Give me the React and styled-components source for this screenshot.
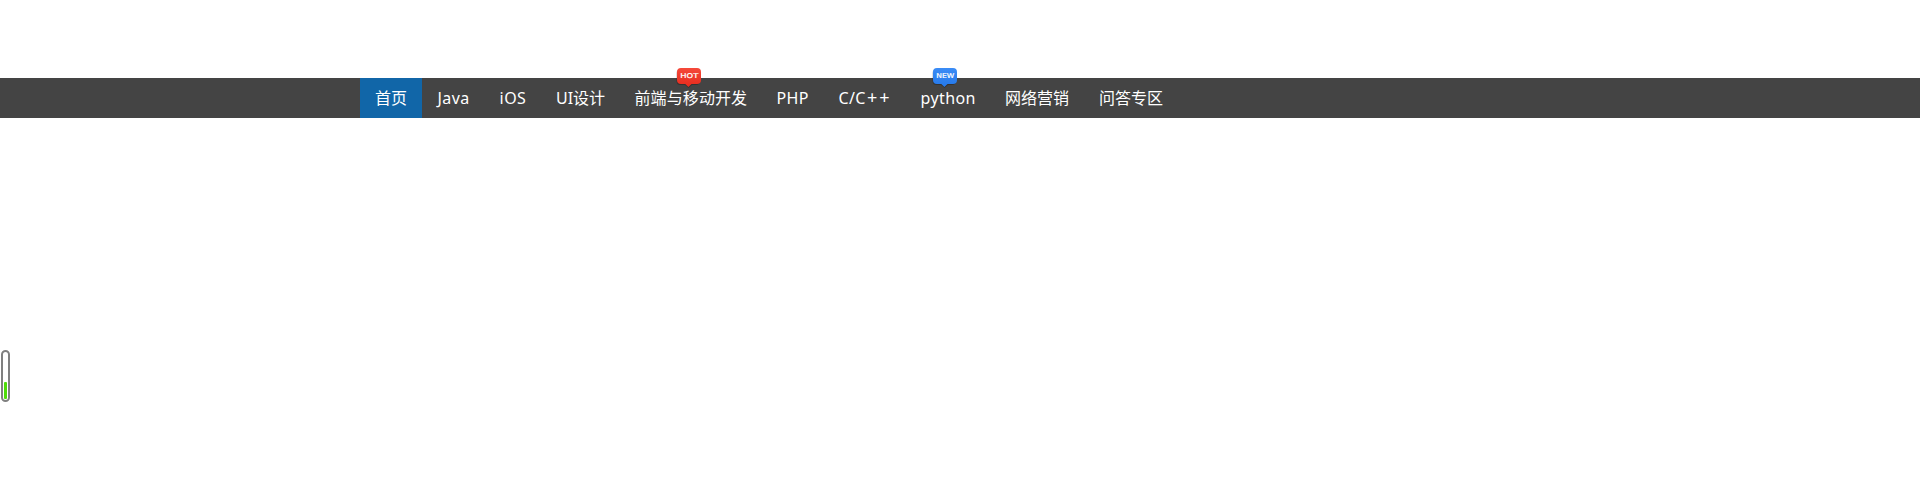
import React from "react";
import styled, { createGlobalStyle } from "styled-components";

const GlobalStyle = createGlobalStyle`
  * { box-sizing: border-box; }
  body { margin: 0; background: #fff; }
`;

const Page = styled.div`
  height: 488px;
  padding-top: 78px;
  overflow: hidden;
  font-family: "Noto Sans", "Noto Sans CJK SC", sans-serif;
`;

const NavBar = styled.nav`
  height: 40px;
  background: #444;
`;

const NavList = styled.ul`
  display: flex;
  width: 1200px;
  height: 40px;
  margin: 0 auto;
  padding: 0;
  list-style: none;
`;

const NavItem = styled.li`
  position: relative;
  width: ${(p) => p.$width}px;
  background: ${(p) => (p.$active ? "#1166a8" : "transparent")};
`;

const NavLink = styled.a`
  display: block;
  height: 40px;
  padding-left: ${(p) => p.$inset}px;
  color: #fff;
  font-size: 16px;
  line-height: 40px;
  letter-spacing: ${(p) => p.$spacing || 0}px;
  white-space: nowrap;
  text-decoration: none;
`;

const Suffix = styled.span`
  font-size: 18px;
  line-height: 1;
  letter-spacing: 2px;
  margin-left: 1px;
`;

const Badge = styled.svg`
  position: absolute;
  top: -11px;
  left: ${(p) => p.$left}px;
  width: 26px;
  height: 22px;
  overflow: visible;
`;

const Gauge = styled.div`
  position: absolute;
  top: 350px;
  left: 1px;
  display: flex;
  align-items: flex-end;
  width: 9px;
  height: 52px;
  padding: 1px;
  border: 2px solid #808080;
  border-radius: 5px;
`;

const GaugeLevel = styled.div`
  width: 3px;
  height: 17px;
  border-radius: 1px;
  background: #4fdc0a;
`;

const badgeColors = {
  HOT: ["#f5493a", "#e62a1c"],
  NEW: ["#3b8cf6", "#2478ea"],
};

function Flag({ label, left }) {
  const [top, bottom] = badgeColors[label];
  return (
    <Badge viewBox="0 0 26 22" $left={left}>
      <defs>
        <linearGradient id={label} x1="0" y1="0" x2="0" y2="1">
          <stop offset="0" stopColor={top} />
          <stop offset="1" stopColor={bottom} />
        </linearGradient>
      </defs>
      <path d="M5 2H20A4 4 0 0 1 24 6V14A4 4 0 0 1 20 18H16L12.5 21L9 18H4.5A4 4 0 0 1 .5 14V6A4 4 0 0 1 5 2Z" fill="#000" opacity=".25" />
      <path d="M5 1H21A4 4 0 0 1 25 5V13A4 4 0 0 1 21 17H15.5L12.4 20L9.3 17H5A4 4 0 0 1 1 13V5A4 4 0 0 1 5 1Z" fill={`url(#${label})`} />
      <text x="4.3" y="11" textLength="18" lengthAdjust="spacingAndGlyphs" fill="#fff" stroke="#fff" strokeWidth=".2" fontFamily="DejaVu Sans, sans-serif" fontSize="6.6">
        {label}
      </text>
    </Badge>
  );
}

const items = [
  { text: "首页", width: 62, active: true },
  { text: "Java", width: 62, inset: 15.5, spacing: 0.4 },
  { text: "iOS", width: 57, inset: 15.5, spacing: 0.5 },
  { text: "UI设计", width: 78 },
  { text: "前端与移动开发", width: 142, inset: 15.5, spacing: 0.1, flag: "HOT", flagLeft: 57 },
  { text: "PHP", width: 62, inset: 15.5, spacing: 0.3 },
  { text: "C/C", suffix: "++", width: 82, inset: 15.5, spacing: 0.4 },
  { text: "python", width: 85, inset: 15.5, spacing: 0.4, flag: "NEW", flagLeft: 27 },
  { text: "网络营销", width: 94 },
  { text: "问答专区", width: 94 },
];

export default function App() {
  return (
    <Page>
      <GlobalStyle />
      <NavBar>
        <NavList>
          {items.map((item) => (
            <NavItem key={item.text} $width={item.width} $active={item.active}>
              <NavLink $spacing={item.spacing} $inset={item.inset || 15}>
                {item.text}
                {item.suffix && <Suffix>{item.suffix}</Suffix>}
              </NavLink>
              {item.flag && <Flag label={item.flag} left={item.flagLeft} />}
            </NavItem>
          ))}
        </NavList>
      </NavBar>
      <Gauge>
        <GaugeLevel />
      </Gauge>
    </Page>
  );
}
